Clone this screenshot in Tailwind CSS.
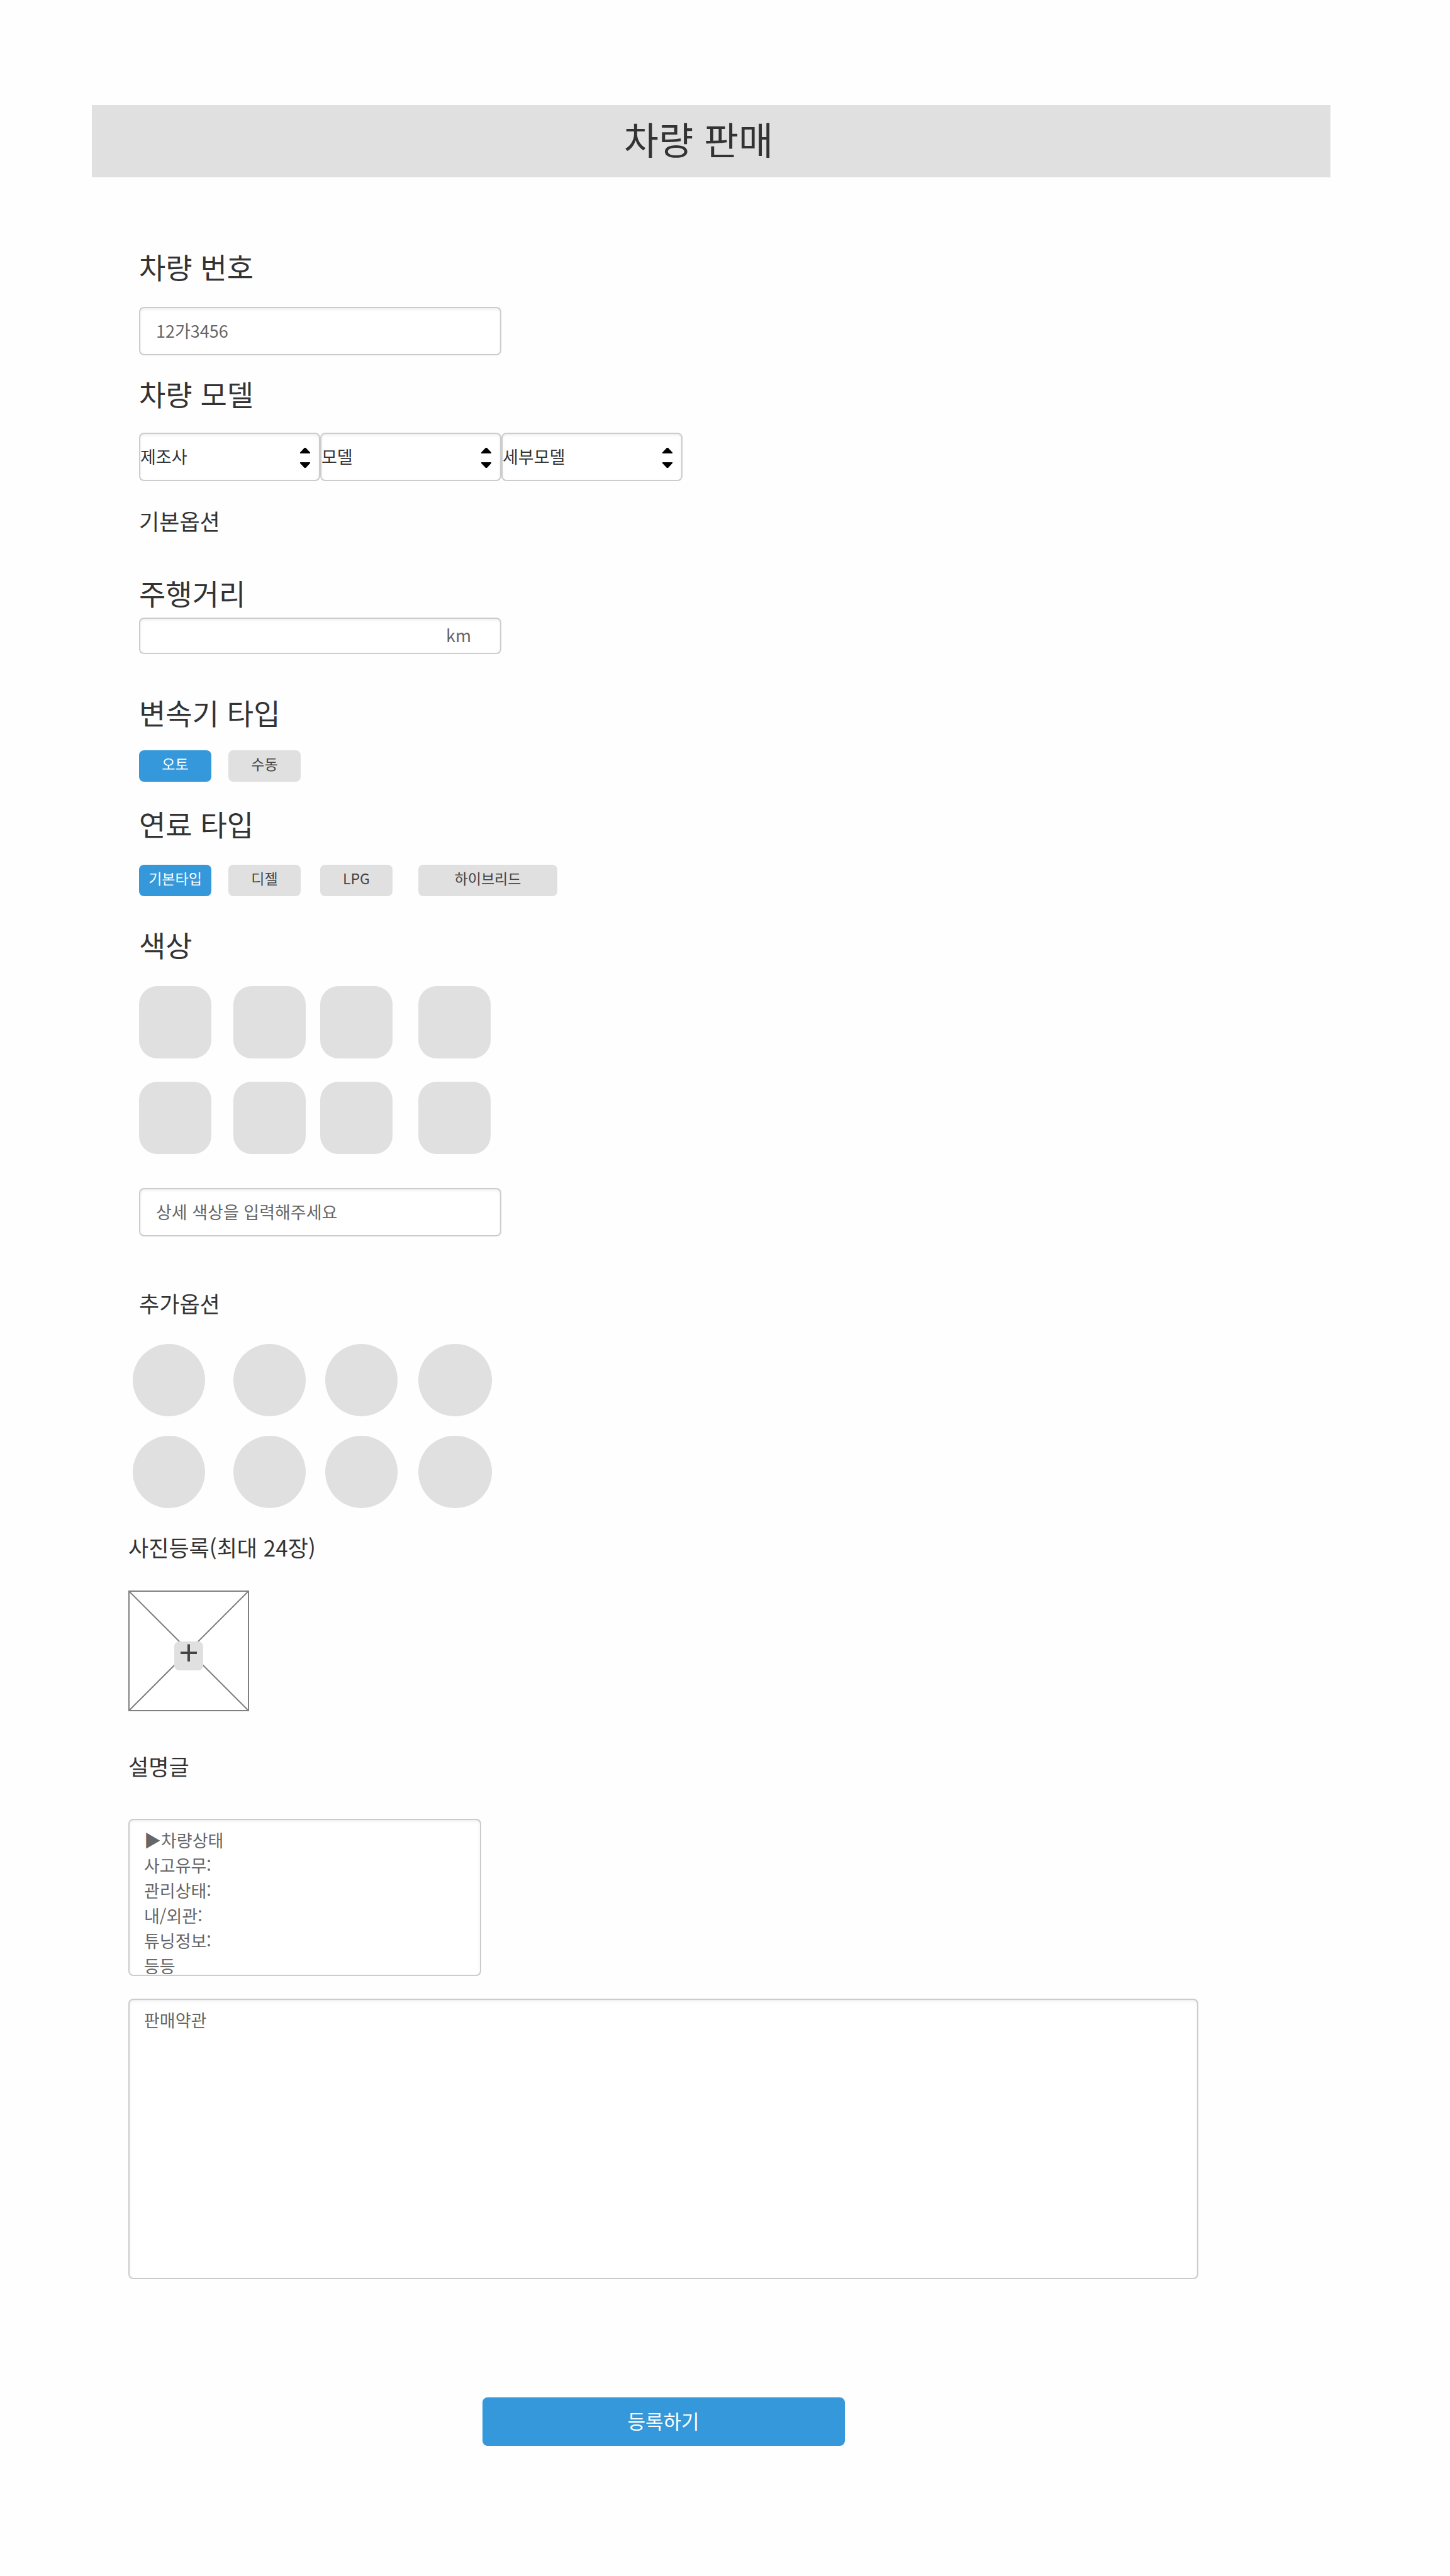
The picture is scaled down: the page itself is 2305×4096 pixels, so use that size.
<!DOCTYPE html>
<html lang="ko">
<head>
<meta charset="utf-8">
<meta name="viewport" content="width=device-width, initial-scale=1">
<title>차량 판매</title>
<script src="https://cdn.jsdelivr.net/npm/@tailwindcss/browser@4"></script>
</head>
<body class="min-h-screen bg-[#fefefe] pt-[167px] pb-[208px] font-['Noto_Sans_CJK_KR',sans-serif] text-[#333]">

<header class="ml-[146px] mr-[190px] flex h-[115px] items-center justify-center bg-[#e0e0e0] pr-10 pb-[10px]">
  <h1 class="text-[60px] leading-[72px]">차량 판매</h1>
</header>

<form class="mr-[400px] ml-[204px] flex flex-col items-start">
  <div class="flex flex-col items-start pl-[17px] pt-[114px]">
    <!-- Plate number -->
    <label for="plate" class="text-[46px] leading-[54px]">차량 번호</label>
    <input id="plate" type="text" placeholder="12가3456" class="mt-[38px] h-[77px] w-[576px] rounded-lg border-2 border-[#ccc] bg-white px-[25px] pb-[3px] text-[27px] shadow-[inset_0_2px_4px_rgb(0_0_0/0.075)] placeholder:text-[#666]">

    <!-- Model -->
    <h2 class="mt-[33px] text-[46px] leading-[54px]">차량 모델</h2>
    <div class="mt-9 flex">
      <div class="relative">
        <select aria-label="제조사" class="h-[77px] w-[288px] appearance-none rounded-lg border-2 border-[#ccc] bg-white text-[27px] shadow-[inset_0_2px_4px_rgb(0_0_0/0.075)]"><option>제조사</option></select>
        <svg class="pointer-events-none absolute top-6 right-4 h-8 w-4" viewBox="0 0 16 32" fill="#000" aria-hidden="true"><path d="M0 9v-1.500L7 0h2l7 7.500V9zM0 23v1.500L7 32h2l7-7.500V23z"/></svg>
      </div>
      <div class="relative">
        <select aria-label="모델" class="h-[77px] w-[288px] appearance-none rounded-lg border-2 border-[#ccc] bg-white text-[27px] shadow-[inset_0_2px_4px_rgb(0_0_0/0.075)]"><option>모델</option></select>
        <svg class="pointer-events-none absolute top-6 right-4 h-8 w-4" viewBox="0 0 16 32" fill="#000" aria-hidden="true"><path d="M0 9v-1.500L7 0h2l7 7.500V9zM0 23v1.500L7 32h2l7-7.500V23z"/></svg>
      </div>
      <div class="relative">
        <select aria-label="세부모델" class="h-[77px] w-[288px] appearance-none rounded-lg border-2 border-[#ccc] bg-white text-[27px] shadow-[inset_0_2px_4px_rgb(0_0_0/0.075)]"><option>세부모델</option></select>
        <svg class="pointer-events-none absolute top-6 right-4 h-8 w-4" viewBox="0 0 16 32" fill="#000" aria-hidden="true"><path d="M0 9v-1.500L7 0h2l7 7.500V9zM0 23v1.500L7 32h2l7-7.500V23z"/></svg>
      </div>
    </div>
    <h3 class="mt-[41px] text-[35px] leading-[44px]">기본옵션</h3>

    <!-- Mileage -->
    <label for="mileage" class="mt-[65px] text-[46px] leading-[54px]">주행거리</label>
    <input id="mileage" type="text" placeholder="km" class="mt-[13px] h-[58px] w-[576px] rounded-lg border-2 border-[#ccc] bg-white pr-[46px] pb-1 text-right text-[27px] shadow-[inset_0_2px_4px_rgb(0_0_0/0.075)] placeholder:text-[#666]">

    <!-- Transmission -->
    <h2 class="mt-[65px] text-[46px] leading-[54px]">변속기 타입</h2>
    <div class="mt-[34px] flex gap-[27px]">
      <button type="button" aria-pressed="true" class="h-[50px] w-[115px] rounded-lg bg-[#3498db] pb-2 text-[23px] text-white">오토</button>
      <button type="button" aria-pressed="false" class="h-[50px] w-[115px] rounded-lg bg-[#e0e0e0] pb-2 text-[23px] text-[#444]">수동</button>
    </div>

    <!-- Fuel -->
    <h2 class="mt-[39px] text-[46px] leading-[54px]">연료 타입</h2>
    <div class="mt-[39px] grid grid-cols-[142px_146px_156px_221px]">
      <button type="button" aria-pressed="true" class="h-[50px] w-[115px] rounded-lg bg-[#3498db] pb-2 text-[23px] text-white">기본타입</button>
      <button type="button" aria-pressed="false" class="h-[50px] w-[115px] rounded-lg bg-[#e0e0e0] pb-2 text-[23px] text-[#444]">디젤</button>
      <button type="button" aria-pressed="false" class="h-[50px] w-[115px] rounded-lg bg-[#e0e0e0] pb-2 text-[23px] text-[#444]">LPG</button>
      <button type="button" aria-pressed="false" class="h-[50px] w-full rounded-lg bg-[#e0e0e0] pb-2 text-[23px] text-[#444]">하이브리드</button>
    </div>

    <!-- Colour swatches -->
    <h2 class="mt-[49px] text-[46px] leading-[54px]">색상</h2>
    <div role="radiogroup" aria-label="색상" class="mt-10 grid grid-cols-[150px_138px_156px_115px] gap-y-[37px]">
      <input type="radio" name="color" aria-label="색상 1" class="size-[115px] appearance-none rounded-[29px] bg-[#e0e0e0]">
      <input type="radio" name="color" aria-label="색상 2" class="size-[115px] appearance-none rounded-[29px] bg-[#e0e0e0]">
      <input type="radio" name="color" aria-label="색상 3" class="size-[115px] appearance-none rounded-[29px] bg-[#e0e0e0]">
      <input type="radio" name="color" aria-label="색상 4" class="size-[115px] appearance-none rounded-[29px] bg-[#e0e0e0]">
      <input type="radio" name="color" aria-label="색상 5" class="size-[115px] appearance-none rounded-[29px] bg-[#e0e0e0]">
      <input type="radio" name="color" aria-label="색상 6" class="size-[115px] appearance-none rounded-[29px] bg-[#e0e0e0]">
      <input type="radio" name="color" aria-label="색상 7" class="size-[115px] appearance-none rounded-[29px] bg-[#e0e0e0]">
      <input type="radio" name="color" aria-label="색상 8" class="size-[115px] appearance-none rounded-[29px] bg-[#e0e0e0]">
    </div>
    <input type="text" aria-label="상세 색상" placeholder="상세 색상을 입력해주세요" class="mt-[54px] h-[77px] w-[576px] rounded-lg border-2 border-[#ccc] bg-white px-[25px] pb-[3px] text-[27px] shadow-[inset_0_2px_4px_rgb(0_0_0/0.075)] placeholder:text-[#666]">
    <h3 class="mt-[84px] text-[35px] leading-[44px]">추가옵션</h3>
  </div>

  <!-- Extra options -->
  <div role="group" aria-label="추가옵션" class="mt-[43px] ml-[7px] grid grid-cols-[160px_146px_148px_117px] gap-y-[31px]">
    <input type="checkbox" aria-label="옵션 1" class="size-[115px] appearance-none rounded-full bg-[#e0e0e0]">
    <input type="checkbox" aria-label="옵션 2" class="size-[115px] appearance-none rounded-full bg-[#e0e0e0]">
    <input type="checkbox" aria-label="옵션 3" class="size-[115px] appearance-none rounded-full bg-[#e0e0e0]">
    <input type="checkbox" aria-label="옵션 4" class="h-[115px] w-full appearance-none rounded-full bg-[#e0e0e0]">
    <input type="checkbox" aria-label="옵션 5" class="size-[115px] appearance-none rounded-full bg-[#e0e0e0]">
    <input type="checkbox" aria-label="옵션 6" class="size-[115px] appearance-none rounded-full bg-[#e0e0e0]">
    <input type="checkbox" aria-label="옵션 7" class="size-[115px] appearance-none rounded-full bg-[#e0e0e0]">
    <input type="checkbox" aria-label="옵션 8" class="h-[115px] w-full appearance-none rounded-full bg-[#e0e0e0]">
  </div>

  <!-- Photos -->
  <h3 class="mt-10 text-[35px] leading-[44px]">사진등록(최대 24장)</h3>
  <div class="relative mt-[47px] size-[192px]">
    <svg class="size-full" viewBox="0 0 192 192" fill="none" stroke="#808080" aria-hidden="true"><rect x="1" y="1" width="190" height="190" fill="#fff" stroke-width="2"/><path d="M1 1l190 190M191 1L1 191" stroke-width="2"/></svg>
    <button type="button" aria-label="사진 추가" class="absolute top-[81px] left-[73px] flex size-[46px] items-center justify-center rounded-lg bg-[#e0e0e0] pb-4 text-[54px] leading-none text-[#444]">+</button>
  </div>

  <!-- Description and terms -->
  <label for="description" class="mt-[65px] text-[35px] leading-[44px]">설명글</label>
  <textarea id="description" class="mt-[62px] h-[250px] w-[561px] resize-none overflow-hidden rounded-lg border-2 border-[#ccc] bg-white px-[23px] pt-3 text-[27px] leading-10 text-[#666] shadow-[inset_0_2px_4px_rgb(0_0_0/0.075)]">▶차량상태
사고유무:
관리상태:
내/외관:
튜닝정보:
등등</textarea>
  <textarea aria-label="판매약관" class="mt-9 h-[446px] w-full resize-none overflow-hidden rounded-lg border-2 border-[#ccc] bg-white px-[23px] pt-3 text-[27px] leading-10 text-[#666] shadow-[inset_0_2px_4px_rgb(0_0_0/0.075)]">판매약관</textarea>

  <button type="submit" class="mt-[188px] h-[77px] w-[576px] self-center rounded-lg bg-[#3498db] pb-[3px] text-[31px] text-white">등록하기</button>
</form>
</body>
</html>
